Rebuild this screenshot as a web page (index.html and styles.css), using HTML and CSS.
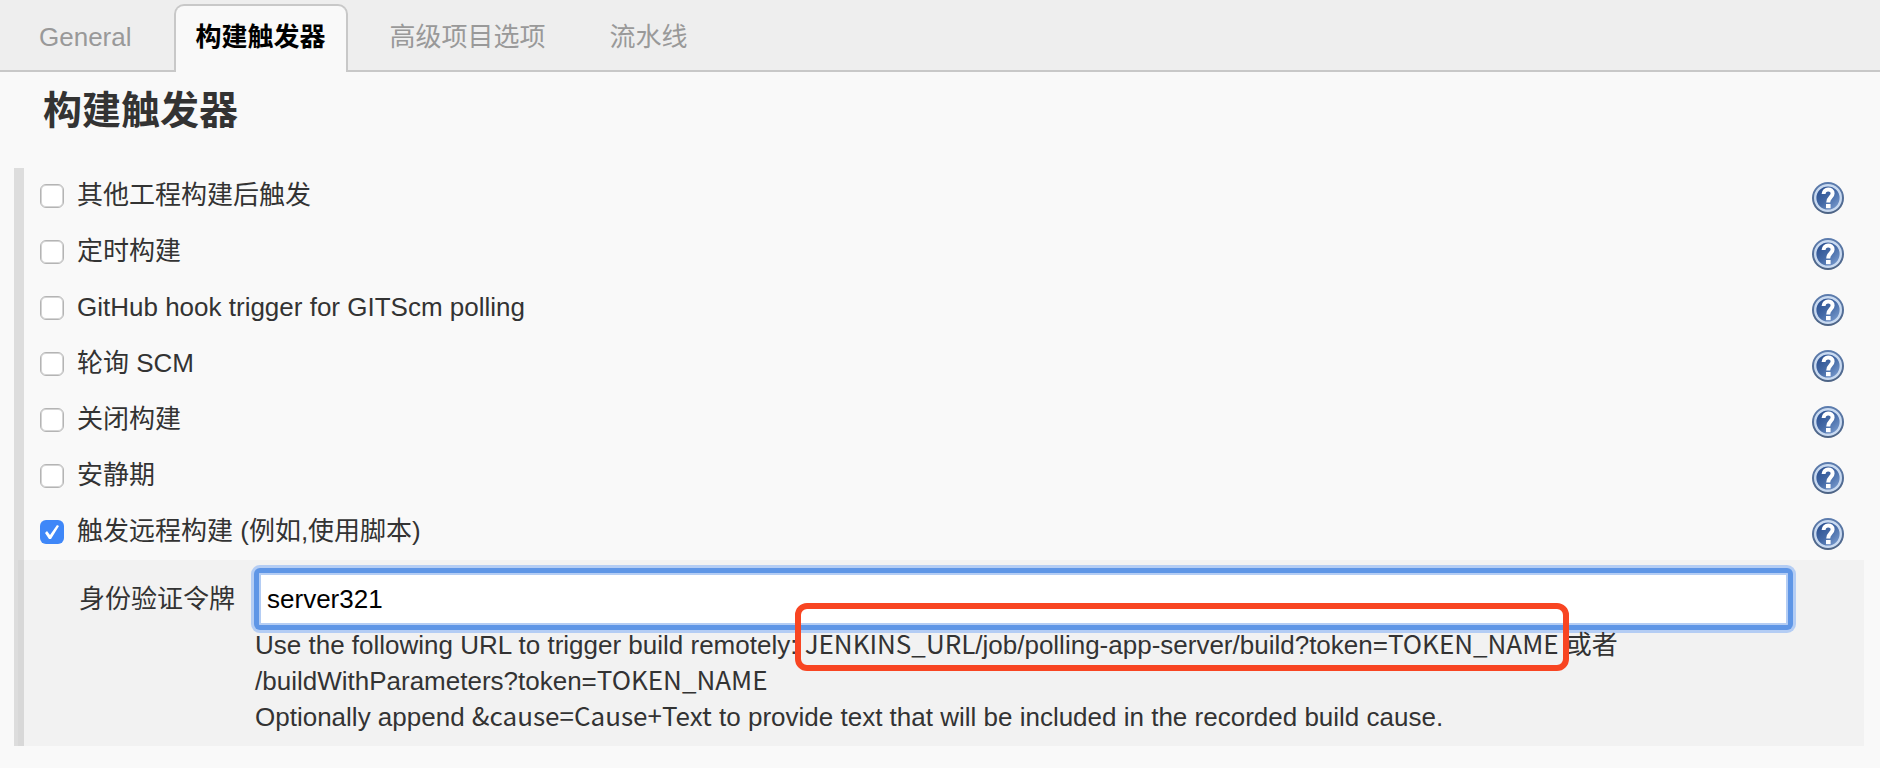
FILE: index.html
```html
<!DOCTYPE html>
<html lang="zh-CN">
<head>
<meta charset="utf-8">
<meta name="viewport" content="width=device-width, initial-scale=1">
<title>构建触发器</title>
<link rel="stylesheet" href="styles.css">
</head>
<body>
<svg class="defs" width="0" height="0" aria-hidden="true">
  <defs>
    <linearGradient id="disc" x1="0" y1="0" x2="1" y2="1">
      <stop offset="0" stop-color="#23488a"/>
      <stop offset="0.5" stop-color="#456aa6"/>
      <stop offset="1" stop-color="#86a8d8"/>
    </linearGradient>
    <linearGradient id="rim" x1="0" y1="0" x2="0" y2="1">
      <stop offset="0" stop-color="#5d7daf"/>
      <stop offset="1" stop-color="#4d6384"/>
    </linearGradient>
    <symbol id="help" viewBox="0 0 32 32">
      <circle cx="16" cy="16" r="16" fill="url(#rim)"/>
      <circle cx="16" cy="16" r="12.8" fill="url(#disc)" stroke="#c9daf1" stroke-width="2.4"/>
      <path d="M11.6 12C11.6 6 20.6 6 20.6 11.4C20.6 15.2 16.2 15.2 16.2 20.4" fill="none" stroke="#fff" stroke-width="4"/>
      <rect x="14" y="22" width="4.6" height="4.2" fill="#fff"/>
    </symbol>
  </defs>
</svg>
<nav class="tabs">
  <a class="tab" href="#general">General</a>
  <a class="tab active" href="#triggers">构建触发器</a>
  <a class="tab" href="#advanced">高级项目选项</a>
  <a class="tab" href="#pipeline">流水线</a>
</nav>
<main id="triggers">
  <h1 class="title">构建触发器</h1>
  <form class="section">
    <div class="row">
      <label class="option"><input class="check" type="checkbox"><span class="caption">其他工程构建后触发</span></label>
      <button class="help" type="button" aria-label="帮助"><svg><use href="#help"/></svg></button>
    </div>
    <div class="row">
      <label class="option"><input class="check" type="checkbox"><span class="caption">定时构建</span></label>
      <button class="help" type="button" aria-label="帮助"><svg><use href="#help"/></svg></button>
    </div>
    <div class="row">
      <label class="option"><input class="check" type="checkbox"><span class="caption">GitHub hook trigger for GITScm polling</span></label>
      <button class="help" type="button" aria-label="帮助"><svg><use href="#help"/></svg></button>
    </div>
    <div class="row">
      <label class="option"><input class="check" type="checkbox"><span class="caption">轮询 SCM</span></label>
      <button class="help" type="button" aria-label="帮助"><svg><use href="#help"/></svg></button>
    </div>
    <div class="row">
      <label class="option"><input class="check" type="checkbox"><span class="caption">关闭构建</span></label>
      <button class="help" type="button" aria-label="帮助"><svg><use href="#help"/></svg></button>
    </div>
    <div class="row">
      <label class="option"><input class="check" type="checkbox"><span class="caption">安静期</span></label>
      <button class="help" type="button" aria-label="帮助"><svg><use href="#help"/></svg></button>
    </div>
    <div class="row">
      <label class="option"><input class="check" type="checkbox" checked><span class="caption">触发远程构建 (例如,使用脚本)</span></label>
      <button class="help" type="button" aria-label="帮助"><svg><use href="#help"/></svg></button>
    </div>
    <div class="panel">
      <label class="field-label" for="token">身份验证令牌</label>
      <div class="field">
        <input class="token" id="token" type="text" value="server321">
        <p class="hint">Use the following URL to trigger build remotely: <span class="marked"><code>JENKINS_URL</code>/job/polling-app-server/build?token=<code>TOKEN_NAME</code></span> 或者 <span class="url">/buildWithParameters?token=<code>TOKEN_NAME</code></span><br>Optionally append <code>&amp;cause=Cause+Text</code> to provide text that will be included in the recorded build cause.</p>
      </div>
    </div>
  </form>
</main>
</body>
</html>
```
FILE: styles.css
```css
* {
  box-sizing: border-box;
}

body {
  margin: 0;
  background: #f9f9f9;
  color: #333;
  font: 26px/36px "Liberation Sans", "Noto Sans CJK SC", sans-serif;
}

.defs {
  position: absolute;
}

.tabs {
  display: flex;
  gap: 20px;
  padding: 4px 17px 0;
  background: #eee;
  box-shadow: inset 0 -2px #c8c8c8;
}

.tab {
  padding: 13px 20px 17px;
  border: 2px solid transparent;
  border-bottom: 0;
  border-radius: 10px 10px 0 0;
  color: #999;
  text-decoration: none;
}

.tab.active {
  border-color: #c8c8c8;
  background: #f9f9f9;
  color: #000;
  font-weight: bold;
}

.title {
  margin: 0;
  padding: 15px 43px 33px;
  font-size: 39px;
  line-height: 48px;
}

.section {
  margin: 0 16px 0 14px;
  padding-left: 10px;
  background: linear-gradient(#ddd, #ddd) 0 0 / 10px 100% no-repeat;
}

.row {
  display: flex;
  align-items: center;
  justify-content: space-between;
  height: 56px;
  padding: 0 20px 0 16px;
}

.option {
  display: flex;
  align-items: center;
  gap: 13px;
}

.caption {
  padding-bottom: 2px;
}

.check {
  appearance: none;
  width: 24px;
  height: 24px;
  margin: 0;
  border: 1px solid #b4b4b4;
  border-radius: 6px;
  background: #fff;
  box-shadow: inset 0 0 0 1px #d4d4d4;
}

.check:checked {
  border: 0;
  background: #3f87f8;
  box-shadow: none;
}

.check:checked::before {
  content: "";
  display: block;
  width: 24px;
  height: 24px;
  background: #fff;
  clip-path: polygon(5px 13px, 7px 11px, 10px 15px, 17px 5px, 19px 6px, 11px 19px, 9px 19px);
}

.help {
  width: 32px;
  height: 32px;
  margin-top: 4px;
  padding: 0;
  border: 0;
  background: none;
}

.help svg {
  display: block;
  width: 32px;
  height: 32px;
}

.panel {
  display: flex;
  gap: 20px;
  margin-left: -6px;
  padding: 9px 72px 11px 55px;
  border-left: 6px solid #d8d8d8;
  background: #f2f2f2;
}

.field-label {
  padding-top: 12px;
  white-space: nowrap;
}

.field {
  flex: 1;
}

.token {
  display: block;
  width: 100%;
  height: 60px;
  padding: 0 8px;
  border: 4px solid #5f96e6;
  border-radius: 5px;
  outline: 0;
  background: #fff;
  box-shadow: 0 0 0 1px #5f96e6, 0 0 0 4px #b4cdf4, inset 0 0 0 2px #b4cdf4;
  color: #000;
  font: inherit;
}

.hint {
  margin: -2px 0 0;
}

code {
  font-family: "Noto Sans CJK SC", sans-serif;
  line-height: 1;
}

.marked {
  position: relative;
  white-space: nowrap;
}

.marked::after {
  content: "";
  position: absolute;
  inset: -27px -10px -11px;
  border: 6px solid #f84522;
  border-radius: 12px;
}

.url {
  white-space: nowrap;
}
```
